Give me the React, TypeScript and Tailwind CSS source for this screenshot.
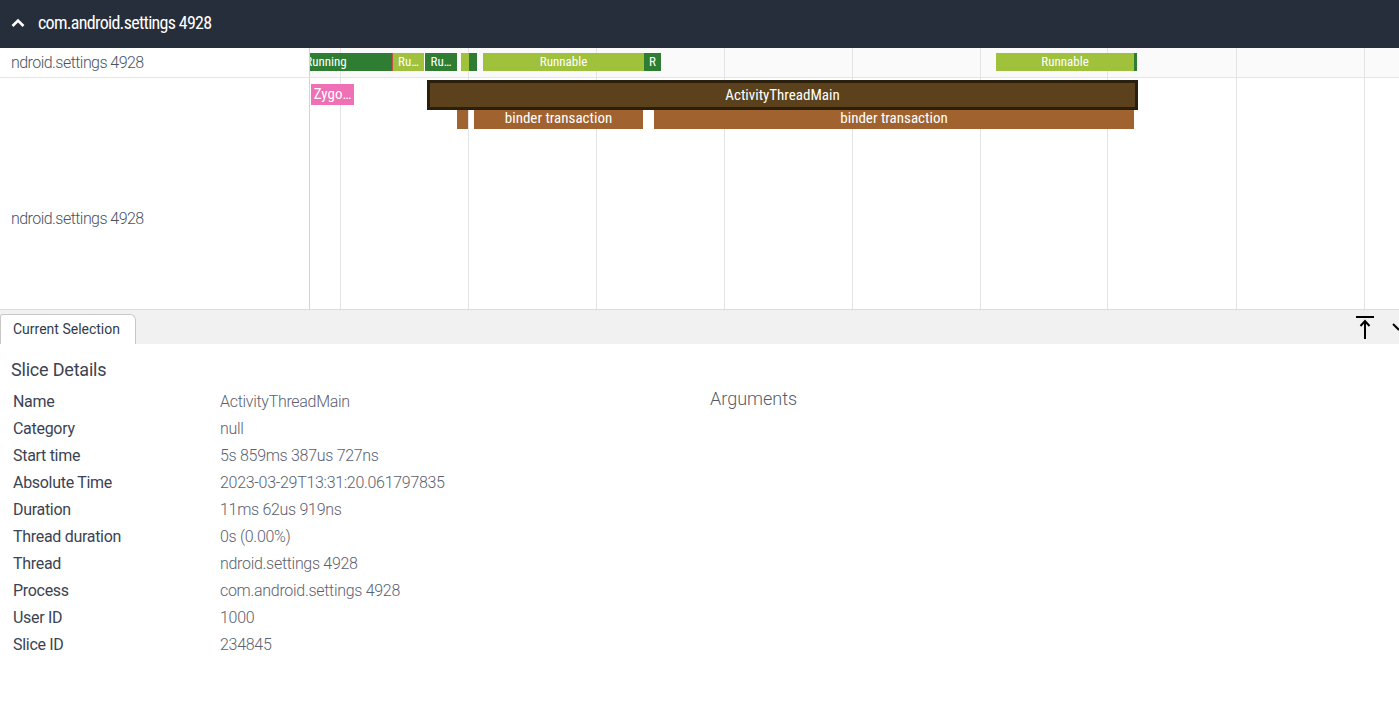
import React from 'react';

type Slice = { left: number; width: number; color: string; label?: string };

const gridLines = [30, 158, 286, 414, 542, 670, 797, 926, 1054];

const DARK = '#2e7d32';
const LIGHT = '#a0c13c';

const stateSlices: Slice[] = [
    { left: -50, width: 132, color: DARK, label: 'Running' },
    { left: 82, width: 1, color: '#c0504d' },
    { left: 83, width: 31, color: LIGHT, label: 'Ru…' },
    { left: 115, width: 32, color: DARK, label: 'Ru…' },
    { left: 151, width: 8, color: LIGHT },
    { left: 159, width: 8, color: DARK },
    { left: 173, width: 161, color: LIGHT, label: 'Runnable' },
    { left: 334, width: 17, color: DARK, label: 'R' },
    { left: 686, width: 138, color: LIGHT, label: 'Runnable' },
    { left: 824, width: 3, color: DARK },
];

const binderSlices: Slice[] = [
    { left: 147, width: 11, color: '#a0632f' },
    { left: 164, width: 169, color: '#a0632f', label: 'binder transaction' },
    { left: 344, width: 480, color: '#a0632f', label: 'binder transaction' },
];

const details: [string, string][] = [
    ['Name', 'ActivityThreadMain'],
    ['Category', 'null'],
    ['Start time', '5s 859ms 387us 727ns'],
    ['Absolute Time', '2023-03-29T13:31:20.061797835'],
    ['Duration', '11ms 62us 919ns'],
    ['Thread duration', '0s (0.00%)'],
    ['Thread', 'ndroid.settings 4928'],
    ['Process', 'com.android.settings 4928'],
    ['User ID', '1000'],
    ['Slice ID', '234845'],
];

const Grid = () => (
    <>
        {gridLines.map((x) => (
            <div key={x} className="absolute top-0 bottom-0 w-px bg-[#e1e3e6]" style={{ left: x }} />
        ))}
    </>
);

const SliceBox = ({ s, top, height, small }: { s: Slice; top: number; height: number; small?: boolean }) => (
    <div
        className={`absolute flex items-center justify-center overflow-hidden whitespace-nowrap [font-stretch:condensed] text-white ${small ? 'text-[13px]' : 'text-[15px]'}`}
        style={{ left: s.left, width: s.width, top, height, background: s.color }}
    >
        {s.label}
    </div>
);

export default function App() {
    return (
        <div className="w-[1399px] h-[726px] overflow-hidden bg-white text-[#3c4455]" style={{ fontFamily: 'Roboto, "Liberation Sans", sans-serif' }}>
            {/* process header */}
            <div className="h-12 bg-[#272e3b] flex items-center pl-[10px] pb-[3px] gap-[12px] text-white">
                <svg width="16" height="16" viewBox="0 0 16 16">
                    <path d="M2.5 11 L8 5.5 L13.5 11" fill="none" stroke="white" strokeWidth="2.6" />
                </svg>
                <span className="text-[18px] tracking-[-0.7px] [font-stretch:condensed] whitespace-nowrap">com.android.settings 4928</span>
            </div>

            {/* thread state track */}
            <div className="flex h-[30px] border-b border-[#e3e5e8]">
                <div className="w-[310px] shrink-0 border-r border-[#cdd4df] bg-white pl-[11px] flex items-center text-[16px] tracking-[-0.55px] font-light text-[#4a5263]">
                    ndroid.settings 4928
                </div>
                <div className="relative flex-1 bg-[#fafafa] overflow-hidden">
                    <Grid />
                    {stateSlices.map((s, i) => (
                        <SliceBox key={i} s={s} top={5} height={18} small />
                    ))}
                </div>
            </div>

            {/* slice track */}
            <div className="flex h-[231px]">
                <div className="w-[310px] shrink-0 border-r border-[#cdd4df] pl-[11px] pt-[129px] text-[16px] tracking-[-0.55px] font-light text-[#4a5263]">
                    ndroid.settings 4928
                </div>
                <div className="relative flex-1 overflow-hidden">
                    <Grid />
                    <SliceBox s={{ left: 1, width: 43, color: '#ef70b5', label: 'Zygo…' }} top={6} height={21} />
                    {binderSlices.map((s, i) => (
                        <SliceBox key={i} s={s} top={29} height={22} />
                    ))}
                    <div className="absolute left-[117px] w-[711px] top-[2px] h-[30px] border-[3px] border-[#2a1e0c] bg-[#5b421c] flex items-center justify-center text-[15px] [font-stretch:condensed] text-white">
                        ActivityThreadMain
                    </div>
                </div>
            </div>

            {/* details panel */}
            <div className="border-t border-[#dcdcdc]">
                <div className="h-[34px] bg-[#f1f1f1] flex items-end justify-between">
                    <div className="h-[30px] w-[136px] bg-white border border-b-0 border-[#c9c9c9] rounded-tr-[6px] rounded-tl-[3px] pl-[12px] flex items-center text-[14px] text-[#333b4a]">
                        Current Selection
                    </div>
                    <div className="flex items-center gap-[16px] h-full pr-0 self-stretch">
                        <svg width="22" height="26" viewBox="0 0 22 26">
                            <path d="M2 3 H20" stroke="black" strokeWidth="2" />
                            <path d="M11 25 V8" stroke="black" strokeWidth="2" />
                            <path d="M6.5 12 L11 7 L15.5 12" fill="none" stroke="black" strokeWidth="2" />
                        </svg>
                        <svg width="10" height="20" viewBox="0 0 10 20" className="-mr-[3px]">
                            <path d="M1 7 L7 13" fill="none" stroke="black" strokeWidth="2" />
                        </svg>
                    </div>
                </div>

                <div className="flex pt-[14px]">
                    <div className="w-[700px] shrink-0">
                        <div className="pl-[11px] text-[18px] h-[23px] leading-[23px] tracking-[-0.2px] text-[#3b4353]">Slice Details</div>
                        <div className="mt-[7px] pl-[13px]">
                            {details.map(([k, v]) => (
                                <div key={k} className="flex h-[27px] items-center text-[16px] tracking-[-0.3px]">
                                    <div className="w-[207px] text-[#3b4353]">{k}</div>
                                    <div className="font-light text-[#5b6170]">{v}</div>
                                </div>
                            ))}
                        </div>
                    </div>
                    <div className="pl-[10px] pt-[29px] text-[18px] font-light text-[#555c6a] leading-[23px]">Arguments</div>
                </div>
            </div>
        </div>
    );
}
